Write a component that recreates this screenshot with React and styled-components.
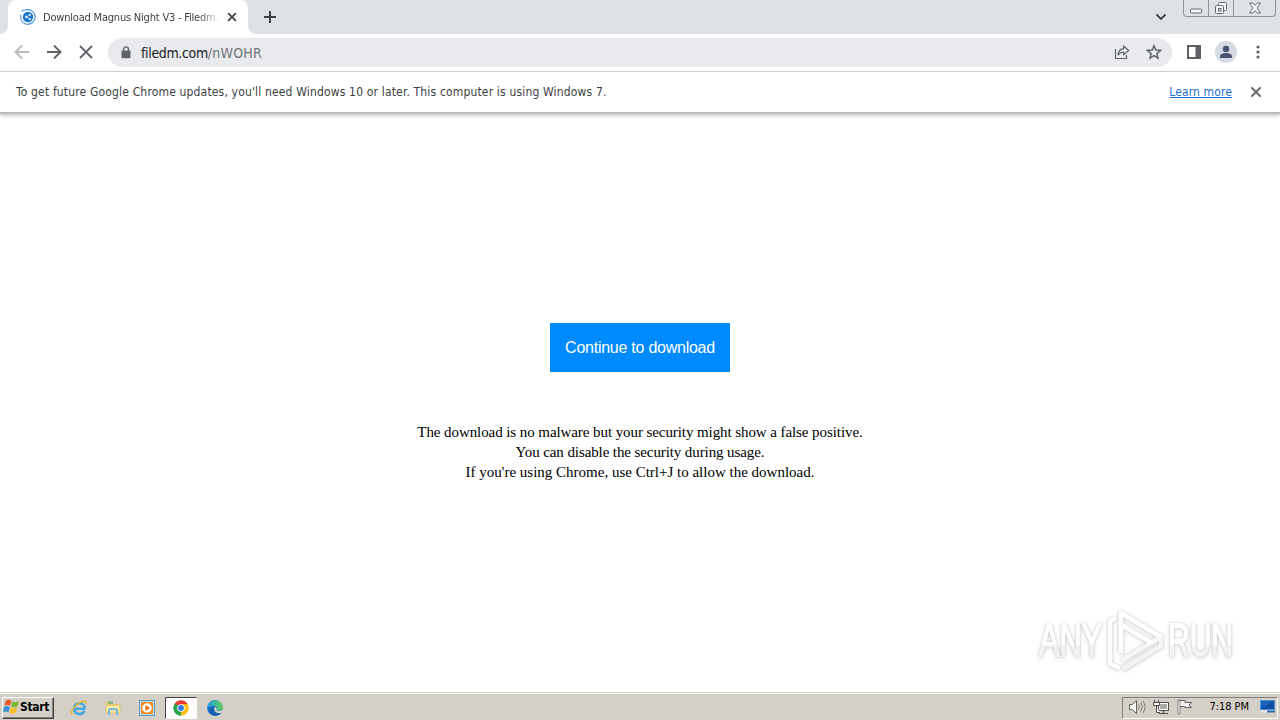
import React from "react"
import styled, { createGlobalStyle } from "styled-components"

const App = () => {
  return (
    <Desktop>
      <GlobalStyle />
      <TabStrip>
        <Tab>
          <TabIcon />
          <TabTitle>Download Magnus Night V3 - Filedm.c</TabTitle>
          <CrossIcon size={16} reach={3.9} width={1.7} color="#3c4043" />
        </Tab>
        <NewTab>
          <svg width="14" height="14" viewBox="0 0 14 14">
            <path d="M7 1v12M1 7h12" stroke="#3c4043" strokeWidth="2" />
          </svg>
        </NewTab>
        <StripSpacer />
        <TabSearch>
          <svg width="12" height="12" viewBox="0 0 12 12">
            <path d="M1.500 3.500L6 8l4.500-4.500" fill="none" stroke="#3c4043" strokeWidth="1.800" />
          </svg>
        </TabSearch>
        <WindowButtons />
      </TabStrip>
      <Toolbar>
        <NavButton>
          <ArrowIcon color="#babcbe" />
        </NavButton>
        <NavButton>
          <ArrowIcon color="#5f6368" forward />
        </NavButton>
        <NavButton>
          <CrossIcon size={16} reach={6} width={1.8} color="#5f6368" />
        </NavButton>
        <AddressBar>
          <LockIcon />
          <Address>
            filedm.com<span>/nWOHR</span>
          </Address>
          <AddressActions>
            <ShareIcon />
            <StarIcon />
          </AddressActions>
        </AddressBar>
        <ToolbarActions>
          <svg width="14" height="14" viewBox="0 0 14 14">
            <path d="M0 0h14v14H0zM2 2v10h6.500V2z" fill="#5f6368" fillRule="evenodd" />
          </svg>
          <Profile>
            <svg width="14" height="14" viewBox="0 0 14 14">
              <circle cx="7" cy="4" r="3.200" fill="#48536f" />
              <path d="M1 13v-1.800C1 9 4.500 8 7 8s6 1 6 3.200V13z" fill="#48536f" />
            </svg>
          </Profile>
          <svg width="4" height="14" viewBox="0 0 4 14">
            <circle cx="2" cy="2" r="1.600" fill="#5f6368" />
            <circle cx="2" cy="7" r="1.600" fill="#5f6368" />
            <circle cx="2" cy="12" r="1.600" fill="#5f6368" />
          </svg>
        </ToolbarActions>
      </Toolbar>
      <InfoBar>
        <InfoText>
          To get future Google Chrome updates, you'll need Windows 10 or later. This computer is using Windows 7.
        </InfoText>
        <LearnMore>Learn more</LearnMore>
        <CrossIcon size={16} reach={4.6} width={2} color="#5f6368" />
      </InfoBar>
      <Page>
        <DownloadButton>Continue to download</DownloadButton>
        <Notes>
          <Note $spacing="-0.08px">The download is no malware but your security might show a false positive.</Note>
          <Note $spacing="-0.1px">You can disable the security during usage.</Note>
          <Note $spacing="0">If you're using Chrome, use Ctrl+J to allow the download.</Note>
        </Notes>
        <Watermark />
      </Page>
      <Taskbar>
        <StartButton>
          <WindowsFlag />
          <span>Start</span>
        </StartButton>
        <QuickLaunch>
          <TaskItem>
            <ExplorerIcon />
          </TaskItem>
          <TaskItem>
            <FolderIcon />
          </TaskItem>
          <TaskItem>
            <PlayerIcon />
          </TaskItem>
          <TaskItem $active>
            <ChromeIcon />
          </TaskItem>
          <TaskItem>
            <EdgeIcon />
          </TaskItem>
        </QuickLaunch>
        <Tray>
          <SpeakerIcon />
          <NetworkIcon />
          <FlagIcon />
          <Clock>7:18 PM</Clock>
          <ScreenIcon />
        </Tray>
      </Taskbar>
    </Desktop>
  )
}

export default App

const CrossIcon = ({ size, reach, width, color }) => {
  const a = size / 2 - reach
  const b = size / 2 + reach
  return (
    <svg width={size} height={size} viewBox={`0 0 ${size} ${size}`}>
      <path d={`M${a} ${a}L${b} ${b}M${b} ${a}L${a} ${b}`} stroke={color} strokeWidth={width} />
    </svg>
  )
}

const ArrowIcon = ({ color, forward }) => (
  <svg width="16" height="16" viewBox="0 0 16 16">
    <path
      d={forward ? "M1 8h13M8 1.500L14.500 8 8 14.500" : "M15 8H2M8 1.500L1.500 8 8 14.500"}
      fill="none"
      stroke={color}
      strokeWidth="1.900"
    />
  </svg>
)

const TabIcon = () => (
  <svg width="16" height="16" viewBox="0 0 16 16">
    <circle cx="8" cy="8" r="5.200" fill="#1b78cf" />
    <path d="M1.500 2.200C5 .2 10-.2 13 2.800s3 8.200-.5 10.700-7.500 2.200-9.500.2" fill="none" stroke="#4c98dc" strokeWidth="1.200" />
    <path d="M.8 5.500C.2 9 1 11.500 3 13.500" fill="none" stroke="#67a8e2" strokeWidth="1.200" />
    <path d="M9.800 6L6.500 8l3.300 2" fill="none" stroke="#d6eafa" strokeWidth=".8" />
    <circle cx="9.800" cy="5.800" r="1.100" fill="#d6eafa" />
    <circle cx="6.300" cy="8" r="1.200" fill="#d6eafa" />
    <circle cx="9.800" cy="10.200" r="1.100" fill="#d6eafa" />
  </svg>
)

const LockIcon = () => (
  <svg width="10" height="13" viewBox="0 0 10 13">
    <path d="M2.500 5V3.400a2.500 2.500 0 0 1 5 0V5" fill="none" stroke="#5f6368" strokeWidth="1.400" />
    <rect x="0.500" y="4.600" width="9" height="7.600" rx="1" fill="#5f6368" />
  </svg>
)

const ShareIcon = () => (
  <svg width="16" height="16" viewBox="0 0 16 16">
    <path d="M1.500 5v9.500h11V11" fill="none" stroke="#5f6368" strokeWidth="1.200" />
    <path
      d="M4 11.200C4.300 7.500 6.200 5 9.700 4.700V2l5 4.500-5 4.300V8C7.200 8 5.400 9 4 11.200z"
      fill="none"
      stroke="#5f6368"
      strokeWidth="1.200"
    />
  </svg>
)

const StarIcon = () => (
  <svg width="16" height="16" viewBox="0 0 16 16">
    <path
      d="M8 1.800l1.800 4.300 4.700.4-3.600 3.100 1.100 4.600L8 11.700l-4 2.500 1.100-4.600L1.500 6.500l4.700-.4z"
      fill="none"
      stroke="#5f6368"
      strokeWidth="1.500"
    />
  </svg>
)

const WindowButtons = () => (
  <Controls>
    <Control $width={24}>
      <svg width="14" height="6" viewBox="0 0 14 6">
        <rect x="1.500" y="1" width="11" height="4" rx="1" fill="#f7f8fa" stroke="#656b75" />
      </svg>
    </Control>
    <Control $width={25}>
      <svg width="14" height="14" viewBox="0 0 14 14">
        <rect x="4.500" y="1.500" width="8" height="8" rx="1" fill="#f7f8fa" stroke="#656b75" />
        <rect x="1.500" y="4.500" width="8" height="8" rx="1" fill="#f7f8fa" stroke="#656b75" />
        <rect x="4.500" y="7.500" width="2.500" height="2.500" fill="#dee1e6" stroke="#656b75" />
      </svg>
    </Control>
    <Control $width={42}>
      <svg width="14" height="12" viewBox="0 0 14 12">
        <path
          d="M1.500 1h3.300L7 3.500 9.200 1h3.300L9 6l3.500 5H9.200L7 8.500 4.800 11H1.500L5 6z"
          fill="#f7f8fa"
          stroke="#656b75"
        />
      </svg>
    </Control>
  </Controls>
)

const Watermark = () => (
  <Logo width="250" height="72" viewBox="0 0 250 72">
    <defs>
      <linearGradient id="logoFill" x1="0" y1="0" x2="0" y2="1">
        <stop offset="0.600" stopColor="#fff" />
        <stop offset="0.620" stopColor="#f2f2f2" />
      </linearGradient>
    </defs>
    <LogoText x="9" y="52" textLength="63">
      ANY
    </LogoText>
    <LogoText x="138" y="52" textLength="65">
      RUN
    </LogoText>
    <g fill="none" stroke="#fff" strokeWidth="4.500" strokeLinejoin="round">
      <path d="M86 14l-6 3v43l10 4" />
      <path d="M91 49V9l40 24-39 23" stroke="#f7f7f7" />
      <path d="M91 49V9l40 24" />
      <path d="M90 20l32 19" />
      <path d="M93 65l38-23v-7" stroke="#f4f4f4" />
    </g>
  </Logo>
)

const WindowsFlag = () => (
  <svg width="17" height="16" viewBox="1 1 15 14">
    <path d="M3.500 2.500C5.500 1.200 7 1.500 8.500 2.500L7.300 7C5.800 6 4.300 6 2.300 7z" fill="#e85a24" />
    <path d="M9.300 3c2 1 3.600 1 5.700-.3L13.800 7.300C12 8.500 10 8.500 8.100 7.500z" fill="#79b82f" />
    <path d="M2 8C4 6.900 5.600 7 7 8l-1.200 4.600C4.200 11.600 2.700 11.700.8 12.800z" fill="#3c8fd3" />
    <path d="M7.900 8.400c2 1 3.600 1 5.600-.1l-1.200 4.500c-2 1.300-3.700 1.200-5.600.2z" fill="#f6bf24" />
  </svg>
)

const ExplorerIcon = () => (
  <svg width="18" height="18" viewBox="0 0 18 18">
    <path
      d="M15 9.800H5.500M14.800 9.800C14.800 2.300 4.200 2.400 4.200 9.600c0 6.400 8.300 7.200 10.300 2.200"
      fill="none"
      stroke="#42a8df"
      strokeWidth="2.600"
    />
    <path d="M2.300 15.500C-1 12 8 2.500 14.500 2c2-.1 2 1.500 1.300 3.200" fill="none" stroke="#e6b537" strokeWidth="1.400" />
  </svg>
)

const FolderIcon = () => (
  <svg width="18" height="18" viewBox="0 0 18 18">
    <path d="M2 3h5l1.500 2H15v9H2z" fill="#e9c865" />
    <path d="M4 2.500h5V5H4z" fill="#7fba78" />
    <path d="M2 6h14v8H2z" fill="#f8e5a0" stroke="#d7b75c" strokeWidth=".6" />
    <path d="M5 16v-4.500q0-1.500 2-1.500h4q2 0 2 1.500V16" fill="none" stroke="#76b7dd" strokeWidth="2" />
  </svg>
)

const PlayerIcon = () => (
  <svg width="18" height="18" viewBox="0 0 18 18">
    <rect x="1.500" y="1.500" width="15" height="15" fill="#b8def4" stroke="#6598c0" />
    <rect x="3" y="3" width="12" height="12" rx="1" fill="#f48b1e" />
    <circle cx="9" cy="9" r="4.700" fill="#fff" />
    <path d="M7.300 6l5 3-5 3z" fill="#e8720c" />
  </svg>
)

const ChromeIcon = () => (
  <svg width="16" height="16" viewBox="0 0 16 16">
    <path d="M8 8L1.300 4.200A7.700 7.700 0 0 1 14.700 4.200z" fill="#e63b2e" />
    <path d="M8 8l6.700-3.800A7.700 7.700 0 0 1 8 15.700z" fill="#fbc116" />
    <path d="M8 8v7.700A7.700 7.700 0 0 1 1.300 4.200z" fill="#27a34b" />
    <path d="M8 4.200h6.700L12 8z" fill="#fbc116" />
    <path d="M4.500 10L1.300 4.200 6 5z" fill="#27a34b" />
    <circle cx="8" cy="8" r="3.800" fill="#fff" />
    <circle cx="8" cy="8" r="2.900" fill="#3979e8" />
  </svg>
)

const EdgeIcon = () => (
  <svg width="18" height="18" viewBox="0 0 18 18">
    <defs>
      <linearGradient id="edgeTop" x1="0" x2="1">
        <stop offset="0" stopColor="#229fde" />
        <stop offset="1" stopColor="#62ce58" />
      </linearGradient>
    </defs>
    <circle cx="9" cy="9" r="7.800" fill="#176fc4" />
    <path d="M1.200 9C1.200 4.500 4.500 1.200 9 1.200s8 3.300 8 7.300c0 3-4.500 4-6.500 2.500 1-1.500.3-4-3.500-4-3 0-5.200 1-5.800 2z" fill="url(#edgeTop)" />
    <path d="M8.500 8c1.800 0 2.800 1.400 2 3 1.300 1.400 4.300 1.300 6.500-.5l1 5-3-1.500c-4 1-8-1.500-6.500-6z" fill="#d4d0c8" />
    <path d="M7.500 8c-1.200 3 .7 5.500 3.500 6.300 2 .5 3.500 0 4.300-.4-2.800 3.300-8.300 4-11.300.2-1-2.600.7-5.600 3.500-6.100z" fill="#155eab" />
  </svg>
)

const SpeakerIcon = () => (
  <svg width="18" height="18" viewBox="0 0 18 18">
    <path d="M1.500 6.500h3l4-4v13l-4-4h-3z" fill="#fff" stroke="#62615d" />
    <path d="M10.500 6.500q1.500 2.500 0 5M12.800 4.500q3 4.500 0 9M15 3q4 6 0 12" fill="none" stroke="#77756f" strokeWidth=".9" />
  </svg>
)

const NetworkIcon = () => (
  <svg width="18" height="18" viewBox="0 0 18 18">
    <rect x="6.500" y="4.500" width="10" height="8" fill="#aaa8a2" stroke="#4e4e4c" />
    <path d="M7.500 5.500h8v6h-8z" fill="none" stroke="#fff" />
    <path d="M7 15.500h9M11.500 13v2" stroke="#4e4e4c" strokeWidth="1.200" />
    <path d="M2.500 2v3M6.500 2v3M1.500 4.500h6v3h-6zM4.500 8v6.500H8" fill="#fff" stroke="#4e4e4c" />
  </svg>
)

const FlagIcon = () => (
  <svg width="18" height="18" viewBox="0 0 18 18">
    <path d="M3.500 2.500h5.500v2h6.500L13 7l2.500 2.500H9v-1H3.500z" fill="#f8f8f6" stroke="#62615d" />
    <path d="M2 2h2v14H2z" fill="#fff" stroke="#62615d" strokeWidth=".8" />
  </svg>
)

const ScreenIcon = () => (
  <svg width="17" height="15" viewBox="0 0 17 15">
    <rect x="1.500" y="1.500" width="14" height="9" fill="#1763bd" stroke="#4b91d8" />
    <path d="M2 8Q8 8 13 2h2v8H2z" fill="#124b9f" />
    <path d="M1 12.500h7" stroke="#e5e5e5" strokeWidth="2" />
    <path d="M8 12.500h8" stroke="#326db3" strokeWidth="2" />
  </svg>
)

const GlobalStyle = createGlobalStyle`
  * {
    box-sizing: border-box;
  }
  body {
    margin: 0;
    overflow: hidden;
  }
  svg {
    display: block;
    flex: none;
  }
`
const uiFont = `"DejaVu Sans Condensed", "DejaVu Sans", sans-serif`

const Desktop = styled.div`
  display: flex;
  flex-direction: column;
  width: 1280px;
  height: 720px;
  background: #fff;
  font-family: ${uiFont};
  white-space: nowrap;
`
const TabStrip = styled.div`
  display: flex;
  height: 34px;
  padding: 0 4px 0 8px;
  background: #dee1e6;
`
const Tab = styled.div`
  display: flex;
  align-items: center;
  width: 240px;
  padding: 0 8px 0 12px;
  background: #fff;
  border-radius: 8px 8px 0 0;
  position: relative;

  &::before,
  &::after {
    content: "";
    position: absolute;
    bottom: 0;
    width: 8px;
    height: 8px;
  }
  &::before {
    left: -8px;
    background: radial-gradient(circle at 0 0, transparent 7.500px, #fff 8px);
  }
  &::after {
    right: -8px;
    background: radial-gradient(circle at 100% 0, transparent 7.500px, #fff 8px);
  }
`
const TabTitle = styled.div`
  width: 178px;
  margin: 0 3px 0 7px;
  color: #3c4043;
  font-size: 11px;
  letter-spacing: -0.2px;
  mask-image: linear-gradient(to right, #000 155px, transparent 178px);
`
const NewTab = styled.div`
  display: flex;
  align-items: center;
  margin-left: 15px;
`
const StripSpacer = styled.div`
  flex: 1;
`
const TabSearch = styled.div`
  display: flex;
  align-items: center;
  margin-right: 16px;
`
const Controls = styled.div`
  display: flex;
  width: 93px;
  height: 17px;
  border: 1px solid #8d939d;
  border-top: 0;
  border-radius: 0 0 4px 4px;
`
const Control = styled.div`
  display: flex;
  align-items: center;
  justify-content: center;
  width: ${({ $width }) => $width}px;

  & + & {
    border-left: 1px solid #8d939d;
  }
  &:first-child {
    padding-top: 5px;
  }
`
const Toolbar = styled.div`
  display: flex;
  align-items: center;
  height: 38px;
  padding-left: 6px;
  border-bottom: 1px solid #d5d7da;

  svg {
    margin-top: -1px;
  }
`
const NavButton = styled.div`
  display: flex;
  justify-content: center;
  width: 32px;
`
const AddressBar = styled.div`
  display: flex;
  align-items: center;
  width: 1064px;
  height: 29px;
  margin-left: 6px;
  padding: 0 10px 0 13px;
  border-radius: 15px;
  background: #e8eaed;
`
const Address = styled.div`
  margin-left: 10px;
  color: #202124;
  font-size: 14px;
  letter-spacing: -0.35px;

  span {
    color: #70757a;
    letter-spacing: 0.2px;
  }
`
const AddressActions = styled.div`
  display: flex;
  gap: 16px;
  margin-left: auto;
`
const ToolbarActions = styled.div`
  display: flex;
  align-items: center;
  margin-left: 15px;
`
const Profile = styled.div`
  display: grid;
  place-items: center;
  width: 22px;
  height: 22px;
  margin: -1px 19px 0 14px;
  border-radius: 50%;
  background: #d6dae2;
`
const InfoBar = styled.div`
  position: relative;
  display: flex;
  align-items: center;
  height: 41px;
  padding: 0 16px;
  border-bottom: 1px solid #b4b4b4;
  box-shadow: 0 1px 0 #c4c4c4, 0 2px 4px rgba(0, 0, 0, 0.3);
  font-size: 12px;
`
const InfoText = styled.div`
  color: #3c4043;
  letter-spacing: 0.165px;
`
const LearnMore = styled.div`
  margin: 0 16px 0 auto;
  color: #1a6fd0;
  letter-spacing: 0.12px;
  text-decoration: underline;
`
const Page = styled.div`
  position: relative;
  display: flex;
  flex: 1;
  flex-direction: column;
  align-items: center;
  padding-top: 210px;
`
const DownloadButton = styled.button`
  width: 180px;
  height: 49px;
  padding: 0;
  border: 0;
  background: #008aff;
  color: #fff;
  font: 16px "Liberation Sans", sans-serif;
  letter-spacing: -0.25px;
`
const Notes = styled.div`
  margin-top: 50px;
  text-align: center;
`
const Note = styled.div`
  color: #000;
  font: 15px/20px "Liberation Serif", serif;
  letter-spacing: ${({ $spacing }) => $spacing};
`
const Logo = styled.svg`
  position: absolute;
  right: 0;
  bottom: 16px;
  overflow: visible;
  filter: drop-shadow(0 0 1px rgba(0, 0, 0, 0.18)) drop-shadow(0 1px 2px rgba(0, 0, 0, 0.13));
`
const LogoText = styled.text.attrs({ lengthAdjust: "spacingAndGlyphs" })`
  fill: url(#logoFill);
  font: 47px "Liberation Sans", sans-serif;
  stroke: url(#logoFill);
  stroke-width: 1.800px;
`
const Taskbar = styled.div`
  display: flex;
  align-items: center;
  height: 28px;
  padding: 2px 2px 0;
  border-top: 1px solid #d4d0c8;
  background: #d4d0c8;
  box-shadow: inset 0 1px #fff;
`
const StartButton = styled.div`
  display: flex;
  align-items: center;
  width: 52px;
  height: 22px;
  padding-bottom: 2px;
  border: 1px solid;
  border-color: #fff #404040 #404040 #fff;
  box-shadow: inset -1px -1px #808080;
  color: #000;
  font-size: 12px;
  font-weight: bold;
  letter-spacing: -0.35px;
`
const QuickLaunch = styled.div`
  display: flex;
  gap: 2px;
  margin-left: 9px;
`
const TaskItem = styled.div`
  display: grid;
  place-items: center;
  width: 32px;
  height: 22px;
  border: 1px solid;
  border-color: ${({ $active }) => ($active ? "#404040 #fff #fff #404040" : "transparent")};
  background: ${({ $active }) => ($active ? "#fff" : "transparent")};
`
const Tray = styled.div`
  display: flex;
  align-items: center;
  width: 156px;
  height: 22px;
  margin-left: auto;
  padding: 0 1px 2px 5px;
  border: 1px solid;
  border-color: #808080 #fff #fff #808080;
  gap: 6px;
`
const Clock = styled.div`
  margin: 0 4px 0 auto;
  color: #000;
  font-size: 11px;
  letter-spacing: -0.05px;
`
